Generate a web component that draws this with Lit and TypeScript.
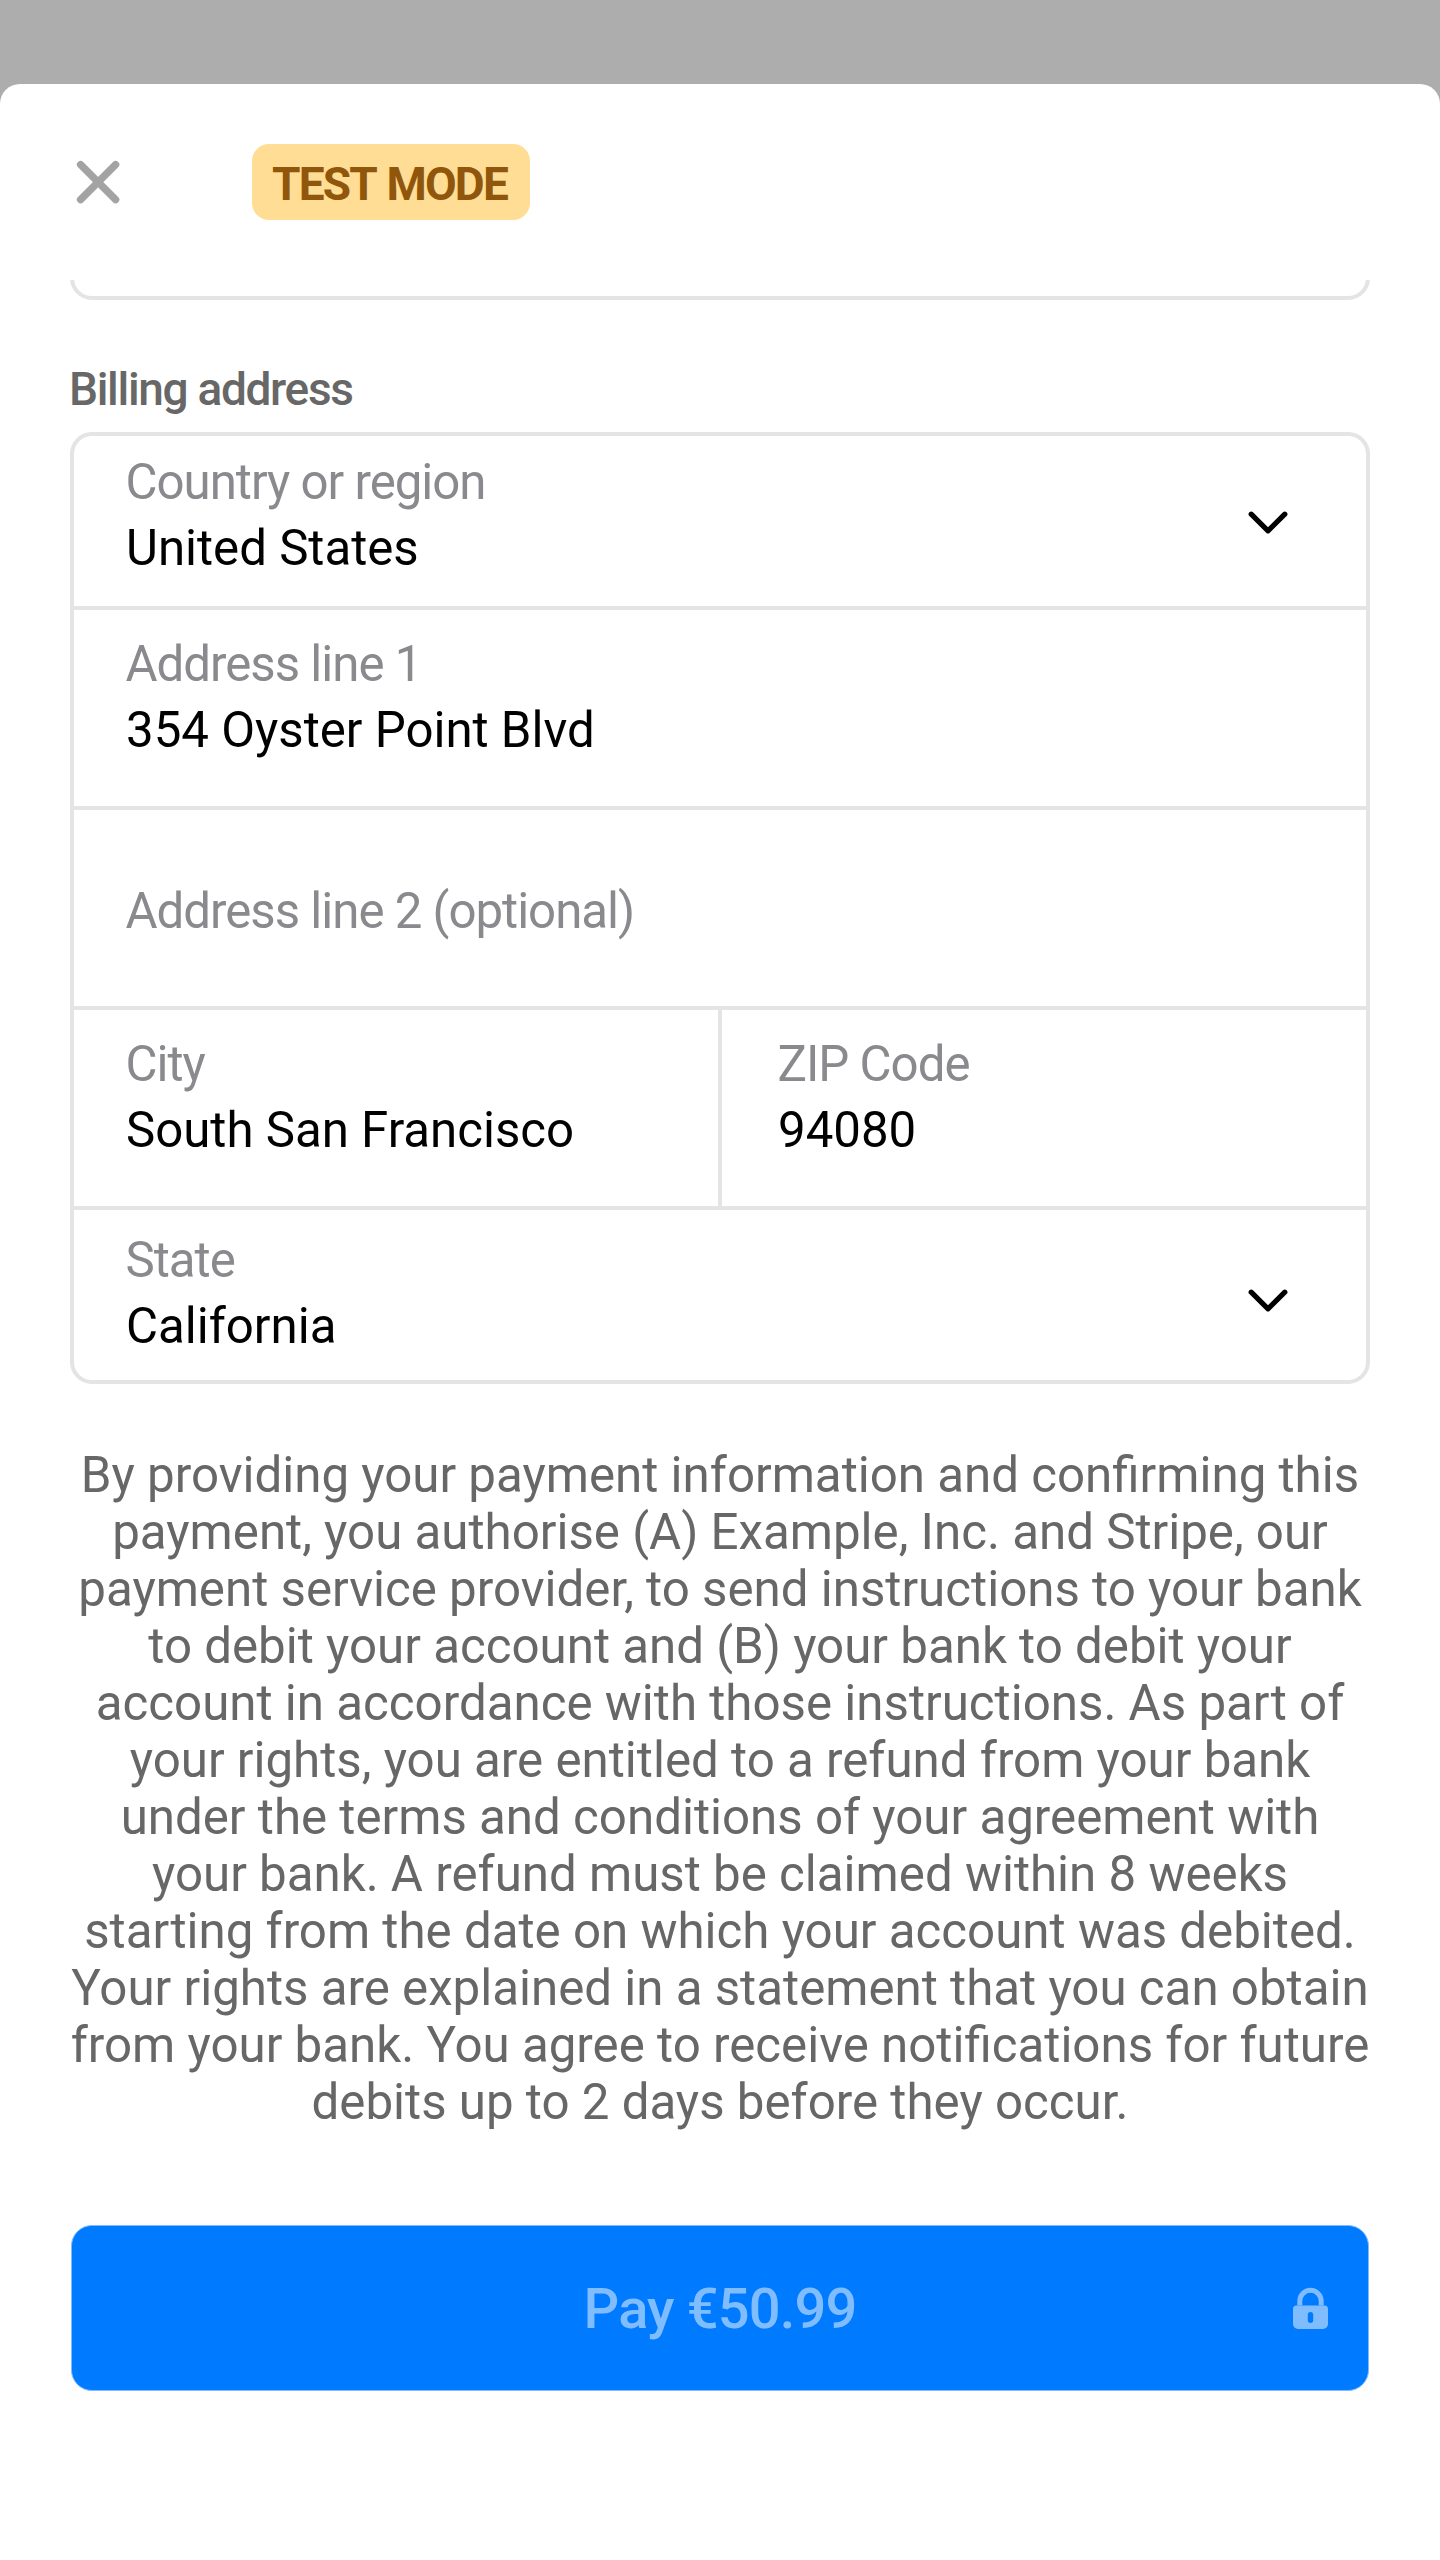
import { LitElement, html, css } from "lit";
import { customElement, property } from "lit/decorators.js";

@customElement("address-field")
class AddressField extends LitElement {
  @property() label = "";
  @property() value = "";
  @property({ type: Boolean }) select = false;

  static styles = css`
    :host {
      display: flex;
      align-items: center;
      justify-content: space-between;
      box-sizing: border-box;
      padding: 0 78px 0 52px;
      font-size: 49.2px;
      white-space: nowrap;
    }
    .texts {
      display: flex;
      flex-direction: column;
      padding-top: 2px;
    }
    .label {
      color: #8a8a8e;
      line-height: 66px;
      letter-spacing: -1px;
      margin-left: -0.5px;
    }
    .value {
      color: #000;
      line-height: 66px;
    }
    .chevron {
      width: 40px;
      height: 24px;
      margin: 18px 0 0 0;
    }
  `;

  render() {
    return html`
      <div class="texts">
        <span class="label">${this.label}</span>
        ${this.value ? html`<span class="value">${this.value}</span>` : ""}
      </div>
      ${this.select
        ? html`<svg class="chevron" viewBox="0 0 40 24" fill="none" stroke="#000" stroke-width="5.2" stroke-linecap="round" stroke-linejoin="round">
            <path d="M3.2 3.2 L20 19.8 L36.8 3.2" />
          </svg>`
        : ""}
    `;
  }
}

@customElement("app-root")
class AppRoot extends LitElement {
  static styles = css`
    :host {
      display: block;
      height: 2560px;
      background: #adadad;
      font-family: Roboto, "Liberation Sans", sans-serif;
      padding-top: 84px;
      box-sizing: border-box;
      overflow: hidden;
    }
    .sheet {
      background: #fff;
      border-radius: 20px 20px 0 0;
      height: 2476px;
      display: flex;
      flex-direction: column;
    }
    .bar {
      height: 196px;
      box-sizing: border-box;
      padding: 60px 0 0 76px;
      display: flex;
      align-items: flex-start;
      flex: none;
    }
    .close {
      width: 44px;
      height: 44px;
      margin: 16px 132px 0 0;
    }
    .badge {
      width: 278px;
      height: 76px;
      box-sizing: border-box;
      padding-left: 20px;
      line-height: 80px;
      border-radius: 17px;
      background: #ffdd94;
      color: #90570c;
      font-size: 46px;
      font-weight: 700;
      letter-spacing: -1.8px;
      word-spacing: 2px;
      white-space: nowrap;
    }
    .scroll {
      padding: 0 70px;
      display: flex;
      flex-direction: column;
    }
    .clip {
      height: 20px;
      overflow: hidden;
      display: flex;
      align-items: flex-end;
    }
    .previous {
      flex: 1;
      height: 120px;
      box-sizing: border-box;
      border: 4px solid #e4e4e6;
      border-radius: 22px;
    }
    h2 {
      margin: 62px 0 0 -1px;
      height: 70px;
      line-height: 54px;
      font-size: 46px;
      font-weight: 500;
      color: #676767;
      letter-spacing: -1.33px;
    }
    .card {
      border: 4px solid #e4e4e6;
      border-radius: 22px;
      height: 952px;
      box-sizing: border-box;
      display: grid;
      grid-template-rows: 170px 196px 196px 196px 170px;
      row-gap: 4px;
      background: #e4e4e6;
      overflow: hidden;
    }
    .card > *,
    .split > * {
      background: #fff;
    }
    .split {
      display: grid;
      grid-template-columns: 1fr 1fr;
      column-gap: 4px;
      background: #e4e4e6;
    }
    .country {
      padding-bottom: 14px;
    }
    .filled {
      padding-bottom: 24px;
    }
    .empty {
      padding-top: 4px;
    }
    .zip {
      padding-left: 56px;
    }
    .state {
      padding-bottom: 6px;
    }
    .mandate {
      margin: 63px -10px 0;
      font-size: 49.25px;
      line-height: 57px;
      letter-spacing: 0;
      color: #676767;
      text-align: center;
      white-space: nowrap;
    }
    .pay {
      margin: 94px 1px 0;
      height: 166px;
      box-sizing: border-box;
      border: 1px solid #7fbcff;
      border-radius: 21px;
      background: #007aff;
      color: #80bdff;
      display: grid;
      grid-template-columns: 1fr auto 1fr;
      align-items: center;
      font-size: 56px;
      font-weight: 500;
      font-family: inherit;
      letter-spacing: -0.85px;
      padding: 0 40px;
    }
    .amount {
      grid-column: 2;
      padding-top: 2px;
    }
    .lock {
      justify-self: end;
      width: 35px;
      height: 42px;
    }
  `;

  private lines = [
    "By providing your payment information and confirming this",
    "payment, you authorise (A) Example, Inc. and Stripe, our",
    "payment service provider, to send instructions to your bank",
    "to debit your account and (B) your bank to debit your",
    "account in accordance with those instructions. As part of",
    "your rights, you are entitled to a refund from your bank",
    "under the terms and conditions of your agreement with",
    "your bank. A refund must be claimed within 8 weeks",
    "starting from the date on which your account was debited.",
    "Your rights are explained in a statement that you can obtain",
    "from your bank. You agree to receive notifications for future",
    "debits up to 2 days before they occur.",
  ];

  render() {
    return html`
      <div class="sheet">
        <div class="bar">
          <svg class="close" viewBox="0 0 44 44" stroke="#a3a3a3" stroke-width="7.4" stroke-linecap="round">
            <path d="M4.6 4.6 L39.6 39.6 M39.6 4.6 L4.6 39.6" />
          </svg>
          <div class="badge">TEST MODE</div>
        </div>
        <div class="scroll">
          <div class="clip"><div class="previous"></div></div>
          <h2>Billing address</h2>
          <div class="card">
            <address-field class="country" label="Country or region" value="United States" select></address-field>
            <address-field class="filled" label="Address line 1" value="354 Oyster Point Blvd"></address-field>
            <address-field class="empty" label="Address line 2 (optional)"></address-field>
            <div class="split">
              <address-field class="filled" label="City" value="South San Francisco"></address-field>
              <address-field class="filled zip" label="ZIP Code" value="94080"></address-field>
            </div>
            <address-field class="state" label="State" value="California" select></address-field>
          </div>
          <div class="mandate">${this.lines.map((l) => html`<div>${l}</div>`)}</div>
          <button class="pay">
            <span class="amount">Pay €50.99</span>
            <svg class="lock" viewBox="0 0 35 42">
              <path d="M6.8 18.5 V14 a10.7 10.7 0 0 1 21.4 0 V18.5" fill="none" stroke="#80bdff" stroke-width="5" />
              <path fill="#80bdff" fill-rule="evenodd" d="M3.5 18.5 h28 a3.5 3.5 0 0 1 3.5 3.5 v15 a5 5 0 0 1 -5 5 h-25 a5 5 0 0 1 -5 -5 v-15 a3.5 3.5 0 0 1 3.5 -3.5 z M17.5 25 a2.7 2.7 0 0 0 -2.7 2.7 v5.6 a2.7 2.7 0 0 0 5.4 0 v-5.6 a2.7 2.7 0 0 0 -2.7 -2.7 z" />
            </svg>
          </button>
        </div>
      </div>
    `;
  }
}
